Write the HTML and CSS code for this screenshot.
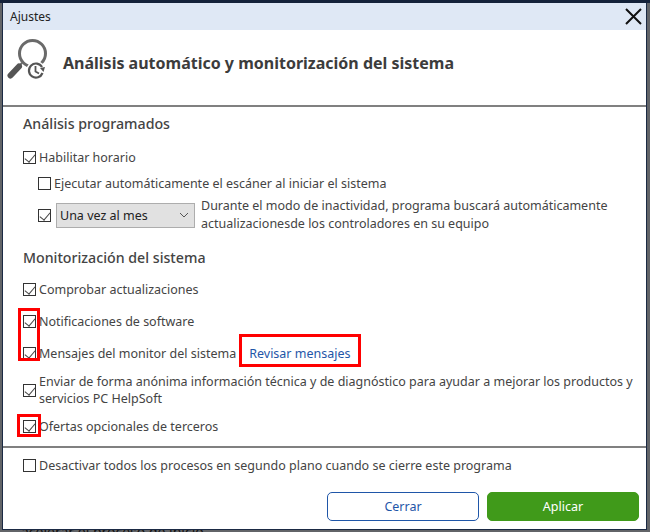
FILE: index.html
```html
<!DOCTYPE html>
<html lang="es">
<head>
    <meta charset="UTF-8">
    <title>Ajustes</title>
    <link rel="stylesheet" href="styles.css">
</head>
<body>
    <div class="behind">acelerar el proceso de inicio</div>
    <div class="window">
        <div class="titlebar">
            <span>Ajustes</span>
            <svg class="close" width="18" height="18" viewBox="0 0 18 18"><path d="M1 1L16 16M16 1L1 16" stroke="#111" stroke-width="2" fill="none"/></svg>
        </div>
        <header class="head">
            <svg class="logo" width="42" height="42" viewBox="0 0 42 42">
                <circle cx="25.500" cy="15.500" r="13" fill="none" stroke="#6a6a6a" stroke-width="3"/>
                <path d="M15 25L12.500 27.500" stroke="#6a6a6a" stroke-width="2"/>
                <path d="M3.500 37.500L12 28.500" stroke="#555" stroke-width="6" stroke-linecap="round"/>
                <circle cx="29" cy="33" r="10" fill="#fff"/>
                <path d="M35.500 35A7 7 0 1 1 35 29" fill="none" stroke="#555" stroke-width="2.200"/>
                <path d="M33 30L38 29L36.500 34Z" fill="#555"/>
                <path d="M28.500 28V33.500L32 35.500" fill="none" stroke="#555" stroke-width="1.800"/>
            </svg>
            <h1>Análisis automático y monitorización del sistema</h1>
        </header>
        <main class="content">
            <h2 class="first">Análisis programados</h2>
            <label class="row"><span class="box on"></span>Habilitar horario</label>
            <label class="row sub"><span class="box"></span>Ejecutar automáticamente el escáner al iniciar el sistema</label>
            <div class="row sub schedule">
                <span class="box on"></span>
                <div class="select">Una vez al mes
                    <svg width="10" height="6" viewBox="0 0 10 6"><path d="M1 1L5 5L9 1" stroke="#555" fill="none"/></svg>
                </div>
                <p>Durante el modo de inactividad, programa buscará automáticamente actualizacionesde los controladores en su equipo</p>
            </div>

            <h2>Monitorización del sistema</h2>
            <label class="row"><span class="box on"></span>Comprobar actualizaciones</label>
            <label class="row gap-notif"><span class="box on"></span>Notificaciones de software</label>
            <div class="row gap-msg">
                <span class="box on"></span>Mensajes del monitor del sistema
                <a class="link" href="#">Revisar mensajes</a>
            </div>
            <label class="row two-lines"><span class="box on"></span><span>Enviar de forma anónima información técnica y de diagnóstico para ayudar a mejorar los productos y servicios PC HelpSoft</span></label>
            <label class="row gap-offer"><span class="box on"></span>Ofertas opcionales de terceros</label>
        </main>
        <footer class="foot">
            <label class="row"><span class="box"></span>Desactivar todos los procesos en segundo plano cuando se cierre este programa</label>
            <div class="buttons">
                <button class="btn btn-close">Cerrar</button>
                <button class="btn btn-apply">Aplicar</button>
            </div>
        </footer>
    </div>
    <div class="mark mark-a"></div>
    <div class="mark mark-b"></div>
    <div class="mark mark-c"></div>
</body>
</html>
```
FILE: styles.css
```css
* {
    box-sizing: border-box;
}

body {
    margin: 0;
    width: 650px;
    height: 532px;
    overflow: hidden;
    padding: 0 4px 3px 3px;
    border-top: 3px solid #14223a;
    background-color: #626468;
    font-family: "Noto Sans", sans-serif;
    font-size: 12.5px;
    color: #444;
}

.window {
    position: relative;
    height: 526px;
    background-color: #fff;
    box-shadow: 0 0 0 1px #1b2a44;
    display: flex;
    flex-direction: column;
}

/* text of the window behind the dialog, cut off at the bottom */
.behind {
    position: absolute;
    left: 21px;
    top: 524px;
    font-size: 14px;
    line-height: 16px;
    color: #111;
}

.titlebar {
    height: 27px;
    background-color: #dfe8f5;
    display: flex;
    align-items: center;
    justify-content: space-between;
    padding: 0 3px 0 7px;
    font-size: 12px;
    color: #222;
}

.head {
    height: 77px;
    display: flex;
    align-items: flex-start;
    padding: 8px 0 0 4px;
    border-bottom: 2px solid #808080;
}

.head h1 {
    margin: 15px 0 0 14px;
    font-size: 16px;
    line-height: 20px;
    font-weight: 700;
    color: #3c3c3c;
}

.content {
    height: 341px;
    padding: 7px 0 0 20px;
    border-bottom: 2px solid #808080;
}

h2 {
    margin: 15px 0 14px;
    font-size: 14.2px;
    line-height: 19px;
    font-weight: 500;
    color: #444;
}

h2.first {
    margin-top: 0;
    margin-bottom: 16px;
}

.row {
    display: flex;
    align-items: center;
    gap: 3px;
    min-height: 17px;
    line-height: 17px;
}

.sub {
    margin-left: 15px;
    margin-top: 9px;
}

.schedule {
    margin-top: 5px;
    gap: 8px;
}

.schedule p {
    margin: 0 0 0 -2px;
    width: 420px;
    line-height: 18px;
}

.select {
    width: 139px;
    height: 25px;
    background-color: #e1e1e1;
    border: 1px solid #adadad;
    color: #222;
    display: flex;
    align-items: center;
    justify-content: space-between;
    padding: 0 5px 0 3px;
    margin-left: -3px;
}

.box {
    width: 13px;
    height: 13px;
    flex: none;
    border: 1px solid #333;
    background-color: #fff;
}

/* check mark */
.box.on {
    position: relative;
}

.box.on::after {
    content: "";
    position: absolute;
    left: 3px;
    top: 0;
    width: 5px;
    height: 9px;
    border: solid #444;
    border-width: 0 1.5px 1.5px 0;
    transform: rotate(40deg);
}

.gap-notif {
    margin-top: 15px;
}

.gap-msg {
    margin-top: 15px;
}

.two-lines {
    margin-top: 11px;
    line-height: 17px;
}

.two-lines span:last-child {
    width: 604px;
}

.gap-offer {
    margin-top: 11px;
}

.link {
    margin-left: 10px;
    color: #1f56a8;
    text-decoration: none;
}

.foot {
    flex: 1;
    padding: 9px 7px 0 20px;
}

.buttons {
    display: flex;
    justify-content: flex-end;
    gap: 8px;
    margin-top: 18px;
}

.btn {
    width: 152px;
    height: 29px;
    border-radius: 5px;
    font-family: inherit;
    font-size: 12.5px;
    padding: 0;
}

.btn-close {
    background-color: #fff;
    border: 1px solid #1f56a8;
    color: #1f56a8;
}

.btn-apply {
    background-color: #409a1a;
    border: 1px solid #409a1a;
    color: #fff;
}

/* red highlight boxes drawn over the screenshot */
.mark {
    position: absolute;
    border: 3px solid #f00;
}

.mark-a {
    left: 18px;
    top: 308px;
    width: 22px;
    height: 53px;
}

.mark-b {
    left: 239px;
    top: 334px;
    width: 122px;
    height: 33px;
}

.mark-c {
    left: 17px;
    top: 414px;
    width: 24px;
    height: 23px;
}
```
